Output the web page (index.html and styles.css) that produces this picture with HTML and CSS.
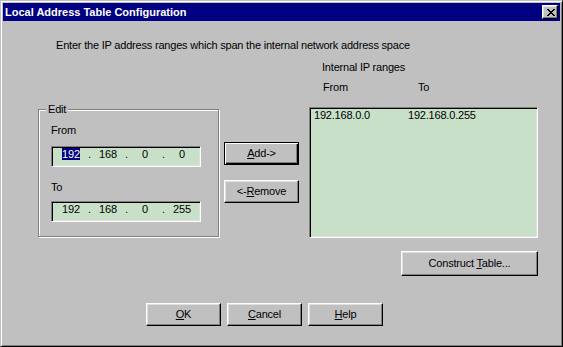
FILE: index.html
```html
<!DOCTYPE html>
<html>
<head>
<meta charset="utf-8">
<link rel="stylesheet" href="styles.css">
</head>
<body>
<div class="window">
  <div class="titlebar">
    <span class="title">Local Address Table Configuration</span>
    <span class="close"><svg width="8" height="7" viewBox="0 0 8 7"><path d="M0 0h2v1h1v1h2v-1h1v-1h2v1h-1v1h-1v1h-1v1h1v1h1v1h1v1h-2v-1h-1v-1h-2v1h-1v1h-2v-1h1v-1h1v-1h1v-1h-1v-1h-1v-1h-1z" fill="#000"/></svg></span>
  </div>
  <div class="body">
    <p class="intro">Enter the IP address ranges which span the internal network address space</p>
    <div class="main">
      <fieldset class="edit">
        <legend>Edit</legend>
        <div class="edit-body">
          <div class="lbl from-lbl">From</div>
          <div class="ipfield">
            <span class="seg"><span class="sel">192</span></span><span class="dot">.</span><span class="seg">168</span><span class="dot">.</span><span class="seg">0</span><span class="dot">.</span><span class="seg">0</span>
          </div>
          <div class="lbl to-lbl">To</div>
          <div class="ipfield">
            <span class="seg">192</span><span class="dot">.</span><span class="seg">168</span><span class="dot">.</span><span class="seg">0</span><span class="dot">.</span><span class="seg">255</span>
          </div>
        </div>
      </fieldset>
      <div class="mid">
        <div class="btn default"><span><u>A</u>dd-&gt;</span></div>
        <div class="btn remove"><span>&lt;-<u>R</u>emove</span></div>
      </div>
      <div class="right">
        <div class="lbl ranges-lbl">Internal IP ranges</div>
        <div class="cols"><span class="hc1">From</span><span class="hc2">To</span></div>
        <div class="list">
          <div class="row"><span class="c1">192.168.0.0</span><span class="c2">192.168.0.255</span></div>
        </div>
        <div class="btn construct"><span>Construct <u>T</u>able...</span></div>
      </div>
    </div>
    <div class="actions">
      <div class="btn"><span><u>O</u>K</span></div>
      <div class="btn"><span><u>C</u>ancel</span></div>
      <div class="btn"><span><u>H</u>elp</span></div>
    </div>
  </div>
</div>
</body>
</html>
```
FILE: styles.css
```css
* { box-sizing: border-box; }
html, body { margin: 0; padding: 0; background: #c0c0c0; }
body {
  font-family: "Liberation Sans", Arial, sans-serif;
  font-size: 11px;
  letter-spacing: -0.2px;
  color: #000;
}
.window {
  width: 563px;
  height: 347px;
  background: #c0c0c0;
  border: 1px solid;
  border-color: #c0c0c0 #000 #000 #c0c0c0;
  box-shadow: inset 1px 1px 0 #fff, inset -1px -1px 0 #808080;
  padding: 2px;
}
.titlebar {
  height: 18px;
  background: #000080;
  display: flex;
  align-items: center;
  justify-content: space-between;
  padding-left: 2px;
  padding-right: 2px;
}
.title {
  color: #fff;
  font-weight: bold;
  line-height: 18px;
  letter-spacing: 0;
}
.close {
  width: 16px;
  height: 14px;
  background: #c0c0c0;
  border: 1px solid;
  border-color: #fff #000 #000 #fff;
  box-shadow: inset -1px -1px 0 #808080, inset 1px 1px 0 #dfdfdf;
  display: flex;
  align-items: center;
  justify-content: center;
  padding-left: 1px;
}
.close svg { display: block; }
.intro {
  margin: 18px 0 0 0;
  padding-left: 53px;
  line-height: 13px;
}
.lbl { line-height: 13px; }
.main {
  display: flex;
  align-items: flex-start;
}
.edit {
  margin: 50px 0 0 35px;
  padding: 0;
  width: 181px;
  border: 1px solid #808080;
  box-shadow: inset 1px 1px 0 #fff, 1px 1px 0 #fff;
  min-width: 0;
}
.edit legend {
  margin-left: 7px;
  padding: 0 2px;
  line-height: 14px;
  background: #c0c0c0;
}
.edit-body {
  padding: 8px 0 14px 12px;
}
.ipfield {
  width: 150px;
  height: 21px;
  margin-top: 9px;
  background: #c8e0c8;
  border: 1px solid;
  border-color: #808080 #fff #fff #808080;
  box-shadow: inset 1px 1px 0 #000, inset -1px -1px 0 #dfdfdf;
  padding: 1px 0 0 4px;
  display: flex;
  align-items: flex-start;
  line-height: 13px;
}
.seg { width: 30px; text-align: center; }
.dot { width: 7px; text-align: center; }
.sel { background: #000080; color: #fff; }
.to-lbl { margin-top: 14px; }
.ipfield + .to-lbl + .ipfield { margin-top: 7px; }
.mid {
  margin: 90px 0 0 5px;
  display: flex;
  flex-direction: column;
  gap: 15px;
}
.btn {
  width: 75px;
  height: 23px;
  background: #c0c0c0;
  border: 1px solid;
  border-color: #fff #000 #000 #fff;
  box-shadow: inset -1px -1px 0 #808080, inset 1px 1px 0 #dfdfdf;
  display: flex;
  align-items: center;
  justify-content: center;
  line-height: 13px;
}
.btn.default {
  border-color: #000;
  box-shadow: inset 1px 1px 0 #fff, inset -1px -1px 0 #000, inset -2px -2px 0 #808080;
}
.right {
  margin: 9px 0 0 10px;
  width: 229px;
  display: flex;
  flex-direction: column;
}
.ranges-lbl { padding-left: 13px; }
.cols {
  margin-top: 7px;
  padding-left: 14px;
  line-height: 13px;
  display: flex;
}
.hc1 { width: 95px; }
.list {
  margin-top: 13px;
  height: 131px;
  background: #c8e0c8;
  border: 1px solid;
  border-color: #808080 #fff #fff #808080;
  box-shadow: inset 1px 1px 0 #000, inset -1px -1px 0 #dfdfdf;
  padding: 1px 2px;
}
.row { display: flex; line-height: 12px; padding-left: 2px; }
.c1 { width: 94px; }
.construct {
  align-self: flex-end;
  width: 137px;
  height: 25px;
  margin-top: 13px;
}
.actions {
  display: flex;
  gap: 6px;
  margin: 27px 0 0 143px;
}
```
